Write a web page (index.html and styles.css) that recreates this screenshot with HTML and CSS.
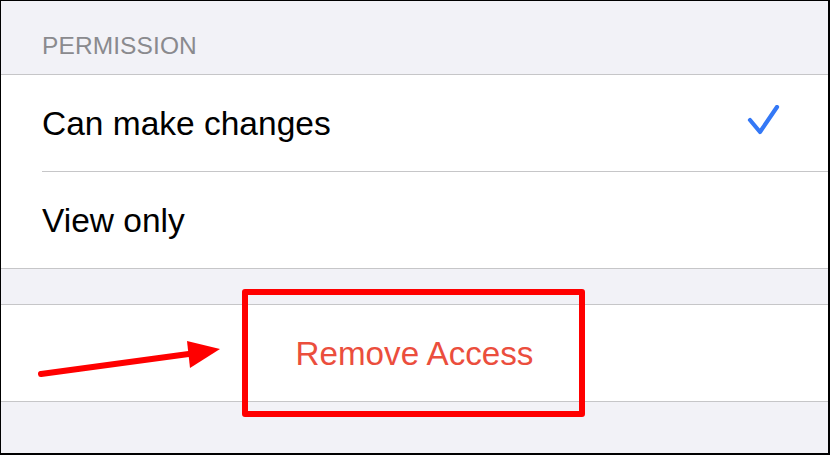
FILE: index.html
```html
<!DOCTYPE html>
<html>
<head>
<meta charset="utf-8">
<link rel="stylesheet" href="styles.css">
</head>
<body>
<div class="frame">
  <div class="section-header">PERMISSION</div>
  <div class="group">
    <div class="row">
      <div class="row-inner sep">
        <span class="label">Can make changes</span>
        <svg class="check" width="34" height="32" viewBox="0 0 34 32">
          <path d="M4 15 L14 27 L31 2" fill="none" stroke="#3478f6" stroke-width="4.2" stroke-linecap="round" stroke-linejoin="round"/>
        </svg>
      </div>
    </div>
    <div class="row">
      <div class="row-inner">
        <span class="label">View only</span>
      </div>
    </div>
  </div>
  <div class="spacer"></div>
  <div class="group">
    <div class="row action">
      <span class="danger">Remove Access</span>
    </div>
  </div>
  <div class="highlight-box"></div>
  <svg class="arrow" width="830" height="455" viewBox="0 0 830 455">
    <line x1="41" y1="374" x2="196" y2="353" stroke="#ff0000" stroke-width="6" stroke-linecap="round"/>
    <polygon points="187,341 220,349 190,368" fill="#ff0000"/>
  </svg>
</div>
</body>
</html>
```
FILE: styles.css
```css
html, body {
  margin: 0;
  padding: 0;
}
body {
  font-family: "Liberation Sans", Arial, sans-serif;
}
.frame {
  position: relative;
  width: 830px;
  height: 455px;
  box-sizing: border-box;
  border-top: 1px solid #000;
  border-left: 1px solid #000;
  border-right: 2px solid #000;
  border-bottom: 2px solid #000;
  background: #f2f2f7;
  overflow: hidden;
}
.section-header {
  height: 73px;
  box-sizing: border-box;
  padding: 33px 0 0 41px;
  font-size: 24.5px;
  line-height: 24px;
  color: #8a8a8e;
  letter-spacing: 0.1px;
}
.group {
  background: #fff;
  border-top: 1px solid #c6c6c8;
  border-bottom: 1px solid #c6c6c8;
}
.row {
  padding-left: 41px;
}
.row-inner {
  height: 96px;
  display: flex;
  align-items: center;
  justify-content: space-between;
  padding-right: 48px;
}
.row-inner.sep {
  border-bottom: 1px solid #c6c6c8;
}
.label {
  font-size: 33.5px;
  color: #000;
  padding-top: 2px;
}
.check {
  display: block;
  margin-top: -4px;
}
.spacer {
  height: 35px;
}
.row.action {
  padding-left: 0;
  height: 96px;
  display: flex;
  align-items: center;
  justify-content: center;
}
.danger {
  font-size: 33.2px;
  color: #eb4e3d;
  padding-top: 2px;
}
.highlight-box {
  position: absolute;
  left: 241px;
  top: 288px;
  width: 343px;
  height: 128px;
  box-sizing: border-box;
  border: 6px solid #ff0000;
  border-radius: 3px;
}
.arrow {
  position: absolute;
  left: -1px;
  top: -1px;
}
```
